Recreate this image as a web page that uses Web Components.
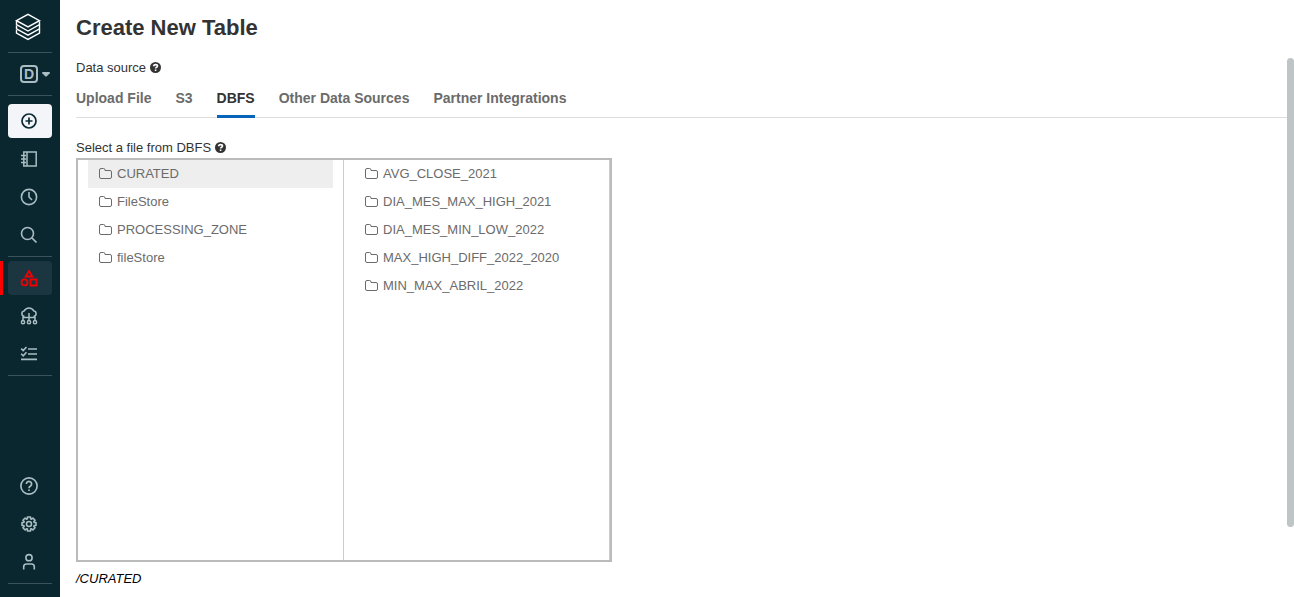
<!DOCTYPE html>
<html lang="en">
<head>
<meta charset="utf-8">
<title>Create New Table</title>
<style>
  html, body { height: 100%; margin: 0; }
  body { font-family: "Liberation Sans", Arial, sans-serif; font-size: 13px; line-height: 20px; color: #333; background: #fff; }
</style>
</head>
<body>
<app-shell>
  <side-nav slot="nav"></side-nav>
  <h1 slot="title">Create New Table</h1>
  <field-label text="Data source"></field-label>
  <source-tabs items="Upload File|S3|DBFS|Other Data Sources|Partner Integrations" selected="DBFS"></source-tabs>
  <field-label text="Select a file from DBFS"></field-label>
  <file-browser>
    <file-column items="CURATED|FileStore|PROCESSING_ZONE|fileStore" selected="CURATED" label="DBFS root"></file-column>
    <file-column items="AVG_CLOSE_2021|DIA_MES_MAX_HIGH_2021|DIA_MES_MIN_LOW_2022|MAX_HIGH_DIFF_2022_2020|MIN_MAX_ABRIL_2022" label="CURATED"></file-column>
  </file-browser>
  <current-path>/CURATED</current-path>
</app-shell>

<script>
const ICONS = {
  logo: ['0 0 26 28', 26, 28, '<g stroke-width="1.4"><path d="M1.500 7.700 13 1.300 24.500 7.700 13 13.900z"/><path d="M1.500 7.700v3.800L13 18l11.500-6.500V8.500"/><path d="M1.500 12.500v3.300L13 22.200l11.500-6.400v-4"/><path d="M1.500 17v3L13 26.400 24.500 20v-4"/></g>'],
  plus: ['0 0 18 18', 18, 18, '<circle cx="9" cy="9" r="7" stroke-width="1.700"/><path d="M9 5.500v7M5.500 9h7" stroke-width="1.700"/>'],
  notebook: ['0 0 18 18', 18, 18, '<path d="M3.800 2h12.400v14H3.800zM7 2v14M1 5.500h5M1 9h5M1 12.500h5" stroke-width="1.500"/>'],
  clock: ['0 0 18 18', 18, 18, '<circle cx="9" cy="9" r="7.600" stroke-width="1.600"/><path d="M9 4v5l3 3" stroke-width="1.600"/>'],
  search: ['0 0 18 18', 18, 18, '<circle cx="7.500" cy="7.500" r="6" stroke-width="1.600"/><path d="m12 12 4.500 4.500" stroke-width="1.700"/>'],
  shapes: ['0 0 18 18', 18, 18, '<g stroke-width="1.800"><path d="M9 2 12.300 7.500H5.700z"/><circle cx="4.500" cy="13.400" r="3"/><path d="M10.500 10.500h6v6h-6z"/></g>'],
  cloud: ['0 0 18 18', 18, 18, '<g stroke-width="1.500"><path d="M4.500 9.200H4a2.600 2.600 0 0 1 0-5.100C5 2.200 6.800 1 9 1s4 1.200 5 3.100a2.600 2.600 0 0 1 0 5.100h-.5M9 6v8M3 13.500V10.500h12v3"/><circle cx="3" cy="15.200" r="1.600"/><circle cx="9" cy="15.200" r="1.600"/><circle cx="15" cy="15.200" r="1.600"/></g>'],
  tasks: ['0 0 18 18', 18, 18, '<path d="M8 4h9M8 9h9M1 14.400h16M1.200 3.600l2 2L6.500 2M1.200 8.800l2 2L6.500 7.200" stroke-width="1.600"/>'],
  help: ['0 0 18 18', 18, 18, '<circle cx="9" cy="9" r="8.100" stroke-width="1.700"/><path d="M6.400 7a2.600 2.500 0 1 1 4.100 2C9.500 9.600 9 10 9 11.200M9 12.400v1.700" stroke-width="1.700"/>'],
  gear: ['0 0 18 18', 18, 18, '<g stroke-width="1.600" stroke-linejoin="round"><path d="M7.400 2h3.200v1.800l1 .4 1.300-1.200 2.200 2.200-1.300 1.300.4 1H16v3h-1.800l-.4 1 1.300 1.300-2.200 2.200-1.300-1.300-1 .4V16H7.400v-1.900l-1-.4L5.100 15l-2.200-2.200 1.300-1.300-.4-1H2v-3h1.800l.4-1-1.300-1.300L5.100 3l1.300 1.200 1-.4z"/><circle cx="9" cy="9" r="2.500"/></g>'],
  user: ['0 0 18 18', 18, 18, '<circle cx="9" cy="4.700" r="3.100" stroke-width="1.600"/><path d="M3.700 16.500v-2.700c0-1.800 1-2.800 2.800-2.800h5c1.800 0 2.800 1 2.800 2.800v2.700" stroke-width="1.600"/>'],
  caret: ['0 0 8 5', 8, 5, '<path d="M.3 0h7.400v1.200L4.600 4.600h-1.200L.3 1.200z" fill="currentColor" stroke="none"/>'],
  folder: ['0 0 13 12', 13, 12, '<path d="M.5 2A1.500 1.500 0 0 1 2 .5h2.500A1.500 1.500 0 0 1 6 2v.5h5A1.500 1.500 0 0 1 12.500 4v5a1.500 1.500 0 0 1-1.500 1.500H2A1.500 1.500 0 0 1 .5 9z"/>'],
  info: ['0 0 11 12', 11, 12, '<circle cx="5.500" cy="5.500" r="5.500" fill="currentColor" stroke="none"/><path d="M3.500 4.200C3.800 3 4.500 2.600 5.500 2.600c1.200 0 2 .6 2 1.500C7.500 5.300 5.600 5.200 5.600 6.600M5.600 7.500v1.600" stroke="#fff" stroke-width="1.600"/>']
};

/* Base class: opens a shadow root and fills it from a template. */
class Base extends HTMLElement {
  connectedCallback() {
    if (this.shadowRoot) return;
    const t = document.createElement('template');
    t.innerHTML = '<style>*{box-sizing:border-box}button{font:inherit;border:0;background:none;padding:0;margin:0;cursor:pointer}' + this.css() + '</style>' + this.html();
    this.attachShadow({ mode: 'open' }).append(t.content.cloneNode(true));
  }
  list() { return this.getAttribute('items').split('|'); }
}

customElements.define('ui-icon', class extends Base {
  css() { return ':host{display:inline-flex;flex:none}svg{display:block}'; }
  html() {
    const [box, w, h, body] = ICONS[this.getAttribute('name')];
    return `<svg viewBox="${box}" width="${w}" height="${h}" fill="none" stroke="currentColor" aria-hidden="true">${body}</svg>`;
  }
});

customElements.define('app-shell', class extends Base {
  css() { return `
    :host{display:flex;height:100vh;overflow:hidden}
    main{flex:1;min-width:0;display:flex;flex-direction:column}
    header{flex:none;height:58px;padding:14px 16px 0}
    ::slotted(h1){margin:0;font-size:22px;line-height:28px;font-weight:700;color:#333}
    .body{flex:1;min-height:0;display:flex}
    .content{flex:1;min-width:0;overflow:hidden;padding-left:16px}
    .rail{flex:none;width:7px}
    .thumb{height:87%;border-radius:4px;background:#bdc5c7}`; }
  html() { return `<slot name="nav"></slot>
    <main><header><slot name="title"></slot></header>
    <div class="body"><div class="content"><slot></slot></div><div class="rail"><div class="thumb"></div></div></div></main>`; }
});

customElements.define('nav-item', class extends Base {
  css() { return `
    :host{display:block;position:relative;color:#a9bdc3}
    button{display:flex;align-items:center;width:100%;height:34px;padding-left:12px;border-radius:4px;color:inherit}
    :host([primary]) button{background:#f3f5f8;color:#0b2a33}
    :host([active]) button{background:#1b3640;color:#f00000}
    :host([active])::before{content:"";position:absolute;left:-8px;top:0;width:3px;height:100%;background:#f00}`; }
  html() { return `<button type="button" aria-label="${this.getAttribute('label')}"><ui-icon name="${this.getAttribute('icon')}"></ui-icon></button>`; }
});

customElements.define('side-nav', class extends Base {
  css() { return `
    :host{flex:none;width:60px}
    nav{height:100%;padding:0 8px 13px;display:flex;flex-direction:column;background:#0a272f}
    .logo{height:53px;padding:13px 0 0 7px;color:#fff}
    .space{height:43px;width:100%;padding-left:12px;display:flex;align-items:center;gap:4px;color:#a9bdc3}
    .badge{width:18px;height:18px;border:2px solid;border-radius:4px;font-size:14px;line-height:14px;font-weight:700;text-align:center}
    .group{display:flex;flex-direction:column;gap:4px;padding:4px 0}
    .first{padding-top:8px}
    .last{margin-top:auto}
    .line{border-bottom:1px solid #3a525b}`; }
  html() {
    const items = a => a.map(([i, l, x = '']) => `<nav-item icon="${i}" label="${l}" ${x}></nav-item>`).join('');
    return `<nav aria-label="Main"><div class="logo line"><ui-icon name="logo"></ui-icon></div>
      <button type="button" class="space line"><span class="badge">D</span><ui-icon name="caret"></ui-icon></button>
      <div class="group first line">${items([['plus', 'Create', 'primary'], ['notebook', 'Workspace'], ['clock', 'Recents'], ['search', 'Search']])}</div>
      <div class="group line">${items([['shapes', 'Data', 'active'], ['cloud', 'Compute'], ['tasks', 'Workflows']])}</div>
      <div class="group last line">${items([['help', 'Help'], ['gear', 'Settings'], ['user', 'Account']])}</div></nav>`;
  }
});

customElements.define('field-label', class extends Base {
  css() { return ':host{display:flex;align-items:center;gap:4px;height:20px;color:#333}'; }
  html() { return `<span>${this.getAttribute('text')}</span><ui-icon name="info"></ui-icon>`; }
});

customElements.define('source-tabs', class extends Base {
  css() { return `
    :host{display:block;margin-bottom:20px}
    div{display:flex;gap:24px;height:40px;border-bottom:1px solid #ddd}
    button{height:40px;padding-top:2px;border-bottom:3px solid transparent;font-size:14px;line-height:20px;font-weight:700;color:#6b6b6b}
    button[aria-selected=true]{color:#333;border-color:#0664b9}`; }
  html() {
    const s = this.getAttribute('selected');
    return `<div role="tablist">${this.list().map(t => `<button type="button" role="tab" aria-selected="${t === s}">${t}</button>`).join('')}</div>`;
  }
});

customElements.define('file-browser', class extends Base {
  css() { return ':host{display:grid;grid-template-columns:1fr 1fr;width:100%;max-width:536px;height:404px;border:2px solid #bbb;box-sizing:border-box}'; }
  html() { return '<slot></slot>'; }
});

customElements.define('file-column', class extends Base {
  css() { return `
    :host{display:block;min-width:0;padding:0 10px;border-right:1px solid #ccc;box-sizing:border-box}
    button{display:flex;align-items:center;gap:5px;width:100%;height:28px;padding-left:11px;color:#6b6b6b}
    button[aria-current=true]{background:#eee}`; }
  html() {
    const s = this.getAttribute('selected');
    return `<div role="group" aria-label="${this.getAttribute('label')}">${this.list().map(t => `<button type="button" aria-current="${t === s}"><ui-icon name="folder"></ui-icon><span>${t}</span></button>`).join('')}</div>`;
  }
});

customElements.define('current-path', class extends Base {
  css() { return ':host{display:block;padding-top:7px;font-style:italic;color:#000}'; }
  html() { return '<slot></slot>'; }
});
</script>
</body>
</html>
